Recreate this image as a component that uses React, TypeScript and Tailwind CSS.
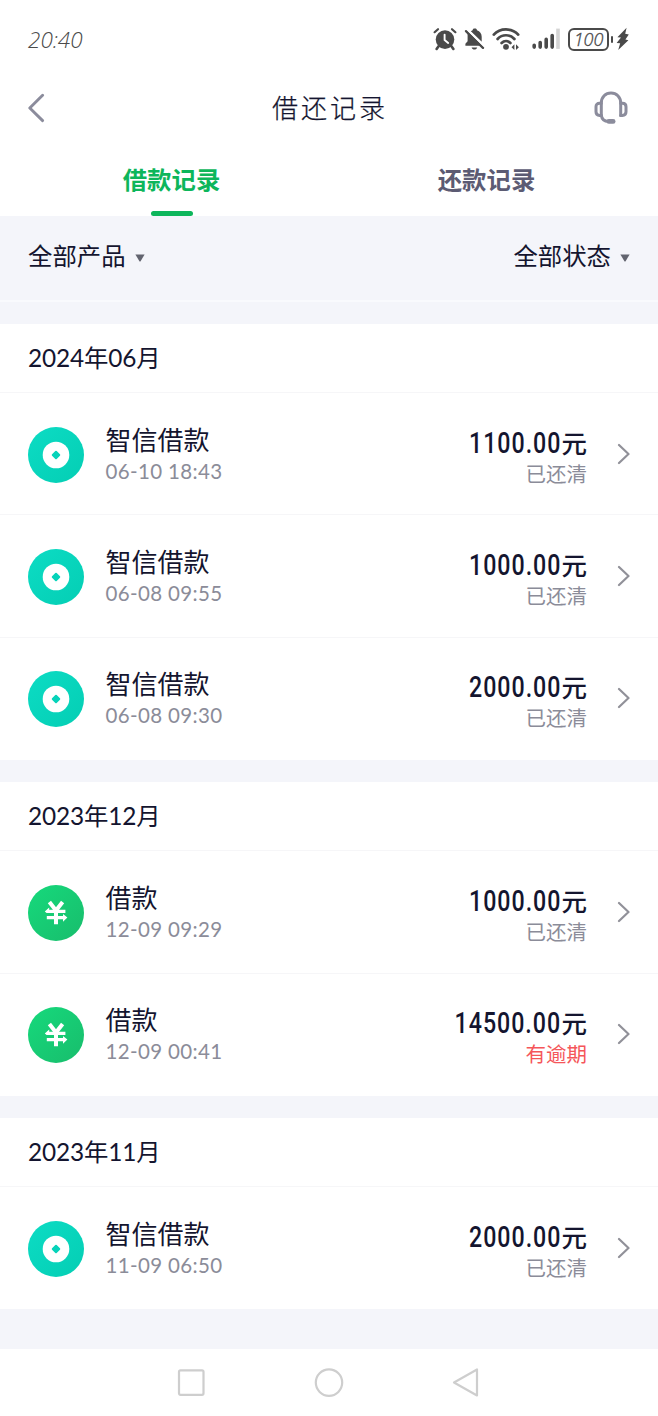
import React from "react";

type Kind = "coin" | "yuan";
interface Loan {
  kind: Kind;
  name: string;
  time: string;
  amount: string;
  overdue?: boolean;
}
interface Month {
  title: string;
  loans: Loan[];
}

const MONTHS: Month[] = [
  {
    title: "2024年06月",
    loans: [
      { kind: "coin", name: "智信借款", time: "06-10 18:43", amount: "1100.00" },
      { kind: "coin", name: "智信借款", time: "06-08 09:55", amount: "1000.00" },
      { kind: "coin", name: "智信借款", time: "06-08 09:30", amount: "2000.00" },
    ],
  },
  {
    title: "2023年12月",
    loans: [
      { kind: "yuan", name: "借款", time: "12-09 09:29", amount: "1000.00" },
      { kind: "yuan", name: "借款", time: "12-09 00:41", amount: "14500.00", overdue: true },
    ],
  },
  {
    title: "2023年11月",
    loans: [{ kind: "coin", name: "智信借款", time: "11-09 06:50", amount: "2000.00" }],
  },
];

function StatusBar() {
  return (
    <div className="flex h-[76px] items-center justify-between pt-[2px] pr-[29px] pl-[28px] text-[#4a4a4a]">
      <span className="pt-[2px] font-['Open_Sans'] text-[22.500px] leading-[28px] font-light italic">20:40</span>
      <div className="flex items-center">
        <svg width="24" height="24" viewBox="0 0 24 24" fill="none" stroke="currentColor" strokeLinecap="round">
          <circle cx="12" cy="12.600" r="9.300" fill="currentColor" stroke="none" />
          <path d="M1.600 5.200 5 2.200M22.400 5.200 19 2.200" strokeWidth="2.200" />
          <path d="m5.400 19.400-1.800 2.600M18.600 19.400l1.800 2.600" strokeWidth="2.600" />
          <path d="M11.600 7.600v5.400l3.600 3" stroke="#fff" strokeWidth="1.900" strokeLinejoin="round" />
        </svg>
        <svg className="ml-[7px]" width="21" height="24" viewBox="0 0 21 24" fill="currentColor">
          <path d="M3.600 6.500 16.200 18.700H1.400v-2l2.200-2.500Z" />
          <path d="M6.800 4.200c.6-.5 1.200-.8 1.800-1 .2-1 .8-1.600 1.700-1.600h1c.9 0 1.500.6 1.700 1.600 2.900.9 4.700 3.300 4.700 6.500v5Z" />
          <path d="M7.600 20.400h5.600c-.5 1.400-1.500 2.200-2.800 2.200s-2.300-.8-2.800-2.200Z" />
          <path d="M2 4.200 19 20.800" stroke="currentColor" strokeWidth="2.400" strokeLinecap="round" />
          <path d="M3.800 2.800 20.400 19" stroke="#fff" strokeWidth="1.800" />
        </svg>
        <svg className="ml-[7px]" width="28" height="24" viewBox="0 0 28 24" fill="none" stroke="currentColor" strokeWidth="2.700" strokeLinecap="round">
          <path d="M1.800 7.600C8 .7 20 .7 26.200 7.600M5.600 12c4.600-5 12.200-5 16.800 0M9.600 16c2.600-2.600 6.200-2.600 8.800 0" />
          <circle cx="14" cy="19.800" r="2.900" fill="currentColor" stroke="none" />
          <path d="m22.400 17.300-2.900 2.900 2.900 2.900ZM24 17.300l2.900 2.900-2.900 2.900Z" fill="currentColor" stroke="none" />
        </svg>
        <svg className="ml-[12px]" width="28" height="24" viewBox="0 0 28 24" strokeWidth="3.600" strokeLinecap="round" stroke="currentColor">
          <path d="M2.200 18.200v1.900M8.200 15.600v4.500M14.200 12.400v7.700M20.200 8.600v11.500" />
          <path d="M26 1.600v20.300" stroke="#d4d4d4" strokeLinecap="butt" />
        </svg>
        <div className="ml-[8px] flex h-[23px] w-[41px] items-center justify-center rounded-[6px] border-2 border-[#4a4a4a]">
          <span className="font-['Open_Sans'] text-[18px] leading-[18px] font-light italic [-webkit-text-stroke:0.300px_#4a4a4a]">100</span>
        </div>
        <div className="ml-[1.500px] h-[7px] w-[2.500px] rounded-sm bg-[#4a4a4a]" />
        <svg className="ml-[3px]" width="13" height="24" viewBox="0 0 13 24" fill="currentColor">
          <path d="M10.600.8 1.400 10.200l3.600.4L.600 16l3.600.2-2 6.800L12.400 13.200l-3-.8 3.400-5-3.600-.6Z" />
        </svg>
      </div>
    </div>
  );
}

function Header() {
  return (
    <div className="flex h-[64px] items-center justify-between pr-[30px] pl-[28px]">
      <svg width="34" height="30" viewBox="0 0 34 30" fill="none" stroke="#8b8c9c" strokeWidth="2.900" strokeLinecap="round" strokeLinejoin="round">
        <path d="M14.600 2.200 1.800 15l12.800 12.600" />
      </svg>
      <h1 className="pb-[1px] pl-[4px] text-[26px] leading-[38px] font-light tracking-[3px] [-webkit-text-stroke:0.250px_#14152f]">借还记录</h1>
      <svg width="34" height="34" viewBox="0 0 34 34" fill="none" stroke="#8b8c9c" strokeWidth="3" strokeLinecap="round" strokeLinejoin="round">
        <path d="M7.300 24.500V12.300C7.300 5.800 11.600 2 17 2s9.700 3.800 9.700 10.300v12.200" />
        <path d="M7.300 12.300H5.600C3.200 12.300 2 13.800 2 15.800v5c0 2.200 1.200 3.600 3.600 3.600h1.700M26.700 12.300h1.700c2.400 0 3.600 1.500 3.600 3.500v5c0 2.200-1.200 3.600-3.600 3.600h-1.700" />
        <path d="M7.300 24.500c.6 3.600 3.200 5.900 7 5.900" />
        <path d="M14.800 30.400h4.400" strokeWidth="4.600" />
      </svg>
    </div>
  );
}

function Tabs() {
  return (
    <div className="flex h-[76px] text-[24.400px] leading-[36px] font-bold">
      <div className="flex flex-1 flex-col items-center justify-between pt-[22px] pl-[14px] text-[#0db65b]">
        <span>借款记录</span>
        <i className="h-[5px] w-[42px] rounded-full bg-[#0db65b]" />
      </div>
      <div className="flex flex-1 justify-center pt-[22px] pr-[14px] text-[#5c5b73]">还款记录</div>
    </div>
  );
}

function Filter({ label }: { label: string }) {
  return (
    <button className="flex items-center gap-[9px] text-[24.400px] leading-[36px]">
      {label}
      <svg width="10" height="8" viewBox="0 0 10 8" fill="#62646f" className="mt-[3px]">
        <path d="M.4.600h9.200L5.600 7.200q-.6.800-1.200 0Z" />
      </svg>
    </button>
  );
}

function LoanIcon({ kind }: { kind: Kind }) {
  if (kind === "coin") {
    return (
      <svg width="56" height="56" viewBox="0 0 56 56">
        <defs>
          <linearGradient id="teal" x1="0" y1="0" x2="1" y2="1">
            <stop offset="0" stopColor="#0cdcc4" />
            <stop offset="1" stopColor="#04ceb4" />
          </linearGradient>
        </defs>
        <circle cx="28" cy="28" r="28" fill="url(#teal)" />
        <circle cx="28" cy="28" r="13.300" fill="#fff" />
        <rect x="24.700" y="24.700" width="6.600" height="6.600" rx="1" transform="rotate(45 28 28)" fill="#06d3ba" />
      </svg>
    );
  }
  return (
    <svg width="56" height="56" viewBox="0 0 56 56">
      <defs>
        <linearGradient id="green" x1="0" y1="0" x2="1" y2="1">
          <stop offset="0" stopColor="#16d97c" />
          <stop offset="1" stopColor="#18bd6c" />
        </linearGradient>
      </defs>
      <circle cx="28" cy="28" r="28" fill="url(#green)" />
      <g fill="none" stroke="#fff">
        <path d="M21.400 17 28 25.500 34.600 17M28 24v15.200" strokeWidth="4" />
        <path d="M19 26.400h18.400M18.800 32.700H37" strokeWidth="3.200" />
      </g>
      <path d="M16.800 26.400 21.200 22.400v5.600h-2.600ZM39.400 32.600 35 36.800v-7.800Z" fill="#fff" />
    </svg>
  );
}

function LoanRow({ loan }: { loan: Loan }) {
  return (
    <li className="flex h-[122.200px] items-center border-b border-[#f6f6f8] pt-[2.200px] pr-[28px] pl-[28px] last:border-transparent">
      <LoanIcon kind={loan.kind} />
      <div className="ml-[21.500px] flex-1">
        <div className="text-[26px] leading-[32px]">{loan.name}</div>
        <div className="text-[20.500px] leading-[30px] tracking-[0.350px] text-[#8b8c99]">{loan.time}</div>
      </div>
      <div className="flex flex-col items-end pt-[6px]">
        <div className="flex text-[25.500px] leading-[32px]">
          <span className="origin-right scale-x-[0.800] font-['Roboto'] text-[29px] font-medium tracking-[1.200px]">{loan.amount}</span>
          <span className="font-medium">元</span>
        </div>
        <div className={loan.overdue ? "text-[20.500px] leading-[30px] text-[#f5565a]" : "text-[20.500px] leading-[30px] text-[#8b8c99]"}>
          {loan.overdue ? "有逾期" : "已还清"}
        </div>
      </div>
      <svg className="mb-[2px] ml-[30px]" width="13" height="22" viewBox="0 0 13 22" fill="none" stroke="#919199" strokeWidth="2.200" strokeLinecap="round" strokeLinejoin="round">
        <path d="m2 2 9.500 9L2 20" />
      </svg>
    </li>
  );
}

export default function App() {
  return (
    <main className="flex h-[1416px] w-[658px] flex-col overflow-hidden bg-[#f4f5fa] font-['Lato','Noto_Sans_CJK_SC',sans-serif] text-[#14152f]">
      <header className="bg-white">
        <StatusBar />
        <Header />
        <Tabs />
      </header>
      <div className="flex h-[86px] items-center justify-between border-b-2 border-[#f9fafd] px-[28px] pb-[4px]">
        <Filter label="全部产品" />
        <Filter label="全部状态" />
      </div>
      <div className="flex flex-1 flex-col gap-[21.800px] pt-[21.600px]">
        {MONTHS.map((m) => (
          <section key={m.title} className="bg-white">
            <h2 className="flex h-[69.700px] items-center border-b border-[#f6f6f8] pl-[28px] text-[24.400px] leading-[36px] tracking-[-0.150px]">{m.title}</h2>
            <ul>
              {m.loans.map((l) => (
                <LoanRow key={l.time} loan={l} />
              ))}
            </ul>
          </section>
        ))}
      </div>
      <nav className="flex h-[67px] items-center justify-between bg-white pr-[178px] pl-[177px]">
        <svg width="28" height="30" viewBox="0 0 28 30" fill="none" stroke="#cecece" strokeWidth="2.200">
          <rect x="2" y="2.300" width="24.500" height="24.500" rx="1.500" />
        </svg>
        <svg width="30" height="30" viewBox="0 0 30 30" fill="none" stroke="#cecece" strokeWidth="2.200">
          <circle cx="15" cy="14.600" r="13.200" />
        </svg>
        <svg width="28" height="30" viewBox="0 0 28 30" fill="none" stroke="#cecece" strokeWidth="2.200" strokeLinejoin="round">
          <path d="M2 14.500 25 1.500v26Z" />
        </svg>
      </nav>
    </main>
  );
}
